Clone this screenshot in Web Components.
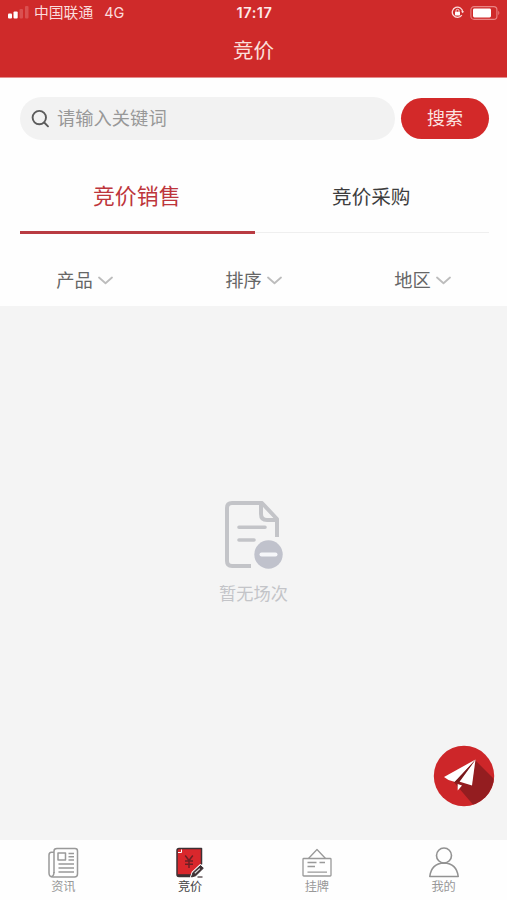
<!DOCTYPE html>
<html lang="zh-CN">
<head>
<meta charset="utf-8">
<title>竞价</title>
<style>
    body {
        margin: 0;
        font-family: "Liberation Sans", "Noto Sans CJK SC", sans-serif;
    }
</style>
</head>
<body>
<auction-page></auction-page>

<template id="status-bar">
<style>
    :host {
        display: grid;
        grid-template-columns: 1fr auto 1fr;
        align-items: center;
        height: 24px;
        padding: 0 6px 0 8px;
        color: #fbdcdc;
        font-size: 14.8px;
        line-height: 24px;
        font-family: Inter, "Noto Sans CJK SC", sans-serif;
    }

    .left, .right {
        display: flex;
        align-items: center;
    }

    .left svg {
        margin-right: 5px;
    }

    .carrier {
        padding-top: 1px;
    }

    .network {
        margin-left: 11px;
        padding-top: 1px;
        font-size: 14.5px;
    }

    .time {
        font-size: 14.5px;
        font-weight: 600;
        letter-spacing: 0.6px;
        color: #fdeaea;
    }

    .right {
        justify-content: flex-end;
        gap: 6px;
    }
</style>
<div class="left">
    <svg width="21" height="13" viewBox="0 0 21 13">
        <rect x="0" y="7.500" width="4" height="5" rx="1" fill="#fff"/>
        <rect x="5.500" y="5.500" width="4.200" height="7" rx="1" fill="#fff"/>
        <rect x="11.500" y="3" width="3.500" height="9.500" rx="1" fill="#da5050"/>
        <rect x="17" y="0" width="3.500" height="12.500" rx="1" fill="#da5050"/>
    </svg>
    <span class="carrier">中国联通</span>
    <span class="network">4G</span>
</div>
<div class="time">17:17</div>
<div class="right">
    <svg width="13" height="13" viewBox="0 0 13 13" fill="none" stroke="#fbdcdc">
        <path d="M10.8 9.2A5.2 5.2 0 1 1 11.7 6" stroke-width="1.3"/>
        <path d="M10 5.5l1.8 1.8L13 5.2z" fill="#fbdcdc" stroke="none"/>
        <rect x="4" y="5.7" width="5" height="3.7" rx=".6" fill="#fff" stroke="none"/>
        <path d="M5 6V4.8a1.5 1.5 0 0 1 3 0V6"/>
    </svg>
    <svg width="31" height="14" viewBox="0 0 31 14">
        <rect x=".9" y=".6" width="26" height="12.8" rx="3.2" fill="none" stroke="#ea8585" stroke-width="1.1"/>
        <rect x="3" y="2.6" width="18" height="8.8" rx="1.4" fill="#fff"/>
        <path d="M28.3 4.8q2 2.2 0 4.4z" fill="#ea8585"/>
    </svg>
</div>
</template>

<template id="page-header">
<style>
    :host {
        display: block;
        height: 78px;
        background-color: #cf2a2a;
        border-bottom: 1px solid #e58d8d;
        box-sizing: border-box;
    }

    h1 {
        margin: 0;
        padding-top: 2px;
        text-align: center;
        font-size: 20.5px;
        line-height: 50px;
        font-weight: 400;
        color: #fbe0dc;
    }
</style>
<status-bar></status-bar>
<h1><slot></slot></h1>
</template>

<template id="search-box">
<style>
    :host {
        display: flex;
        align-items: center;
        gap: 6px;
        padding: 19px 18px 0 20px;
    }

    .field {
        flex: 1;
        display: flex;
        align-items: center;
        height: 43px;
        padding-left: 11px;
        border-radius: 22px;
        background-color: #f2f2f2;
        box-sizing: border-box;
        color: #989898;
        font-size: 18.3px;
        line-height: 42px;
    }

    .field svg {
        margin-right: 7px;
    }

    button {
        width: 88px;
        height: 41px;
        margin-bottom: 1px;
        padding: 0 0 2px;
        border: none;
        border-radius: 21px;
        background-color: #d32929;
        color: #fbe4e2;
        font: inherit;
        font-size: 18px;
    }
</style>
<div class="field">
    <svg width="19" height="19" viewBox="0 0 19 19" fill="none" stroke="#5c5c5c" stroke-width="1.9" stroke-linecap="round">
        <circle cx="8.3" cy="8.6" r="6.7"/>
        <path d="M13.2 13.5l3.8 3.8"/>
    </svg>
    <slot></slot>
</div>
<button type="button">搜索</button>
</template>

<template id="tab-item">
<style>
    :host {
        flex: 1;
        display: flex;
        justify-content: center;
        align-items: center;
        height: 75px;
        padding: 0 1px 3px 0;
        box-sizing: border-box;
        font-size: 19.6px;
        color: #3d3d3d;
        background: linear-gradient(#efefef, #efefef) 0 73px / 100% 1px no-repeat;
    }

    :host([active]) {
        padding-bottom: 4px;
        font-size: 21.9px;
        color: #bd353b;
        background: linear-gradient(#b93b42, #b93b42) 0 100% / 100% 3px no-repeat;
    }
</style>
<slot></slot>
</template>

<template id="filter-item">
<style>
    :host {
        flex: 1;
        display: flex;
        justify-content: center;
        align-items: center;
        gap: 5px;
        font-size: 18.3px;
        color: #666;
    }

    svg {
        margin-top: 3px;
    }
</style>
<slot></slot>
<svg width="15" height="9" viewBox="0 0 15 9" fill="none" stroke="#bcbcbc" stroke-width="1.8" stroke-linecap="round" stroke-linejoin="round">
    <path d="M1 1.5l6.5 5.7L14 1.5"/>
</svg>
</template>

<template id="empty-state">
<style>
    :host {
        display: flex;
        flex-direction: column;
        align-items: center;
        color: #c3c4c8;
        font-size: 17.2px;
        line-height: 26px;
    }

    svg {
        margin-bottom: 11px;
    }
</style>
<svg width="60" height="70" viewBox="0 0 60 70" fill="none" stroke="#c3c4c8" stroke-width="4" stroke-linecap="round" stroke-linejoin="round">
    <path d="M27 66H8q-5 0-5-5V8q0-5 5-5h30l15 16v18" stroke-linecap="butt"/>
    <path d="M37 3v11q0 6 6 6h10"/>
    <path d="M15 27.3h26M15 40h15" stroke-width="3.6"/>
    <circle cx="44.5" cy="54.5" r="14.2" fill="#c0c2cc" stroke="none"/>
    <path d="M37.5 54.5h14" stroke="#f6f7fa"/>
</svg>
<slot></slot>
</template>

<template id="send-button">
<style>
    :host {
        display: block;
        position: absolute;
        right: 12px;
        bottom: 33px;
        width: 62px;
        height: 62px;
    }
</style>
<svg width="62" height="62" viewBox="0 0 62 62">
    <defs>
        <clipPath id="disc"><circle cx="31" cy="31" r="30"/></clipPath>
    </defs>
    <circle cx="31" cy="31" r="30.2" fill="#cd2629"/>
    <path d="M42 15L76 49 60 76H54L19 35z" fill="#941d20" clip-path="url(#disc)"/>
    <path d="M42.5 14.500L11 32l4.500 3 6.500 2z" fill="#fff"/>
    <path d="M42.5 14.500L26 36.500l13 4z" fill="#fff"/>
    <path d="M42 15.500L21.500 37l4.500.500z" fill="#79191b"/>
    <path d="M24.700 39l4.300 1.500-4.300 5z" fill="#fff"/>
</svg>
</template>

<template id="nav-item">
<style>
    :host {
        flex: 1;
        display: flex;
        flex-direction: column;
        align-items: center;
        padding-top: 6px;
        font-size: 12.2px;
        line-height: 16px;
        color: #989898;
    }

    :host([active]) {
        color: #444;
    }

    .icon {
        height: 33px;
    }
</style>
<div class="icon"><slot name="icon"></slot></div>
<slot></slot>
</template>

<template id="auction-page">
<style>
    :host {
        display: flex;
        flex-direction: column;
        height: 900px;
        background-color: #fefefe;
    }

    svg {
        display: block;
    }

    .tabs {
        display: flex;
        padding: 19px 18px 0 20px;
    }

    .filters {
        display: flex;
        height: 72px;
        padding-top: 18px;
        box-sizing: border-box;
    }

    main {
        flex: 1;
        position: relative;
        background-color: #f4f4f4;
        padding-top: 194px;
    }

    nav {
        display: flex;
        height: 60px;
        background-color: #fefefe;
    }
</style>
<page-header>竞价</page-header>
<search-box>请输入关键词</search-box>
<div class="tabs">
    <tab-item active>竞价销售</tab-item>
    <tab-item>竞价采购</tab-item>
</div>
<div class="filters">
    <filter-item>产品</filter-item>
    <filter-item>排序</filter-item>
    <filter-item>地区</filter-item>
</div>
<main>
    <empty-state>暂无场次</empty-state>
    <send-button></send-button>
</main>
<nav>
    <nav-item>
        <svg slot="icon" width="32" height="34" viewBox="0 0 32 34" fill="none" stroke="#999" stroke-width="1.5" stroke-linejoin="round">
            <path d="M7 6.200H4.500Q2 6.200 2 9v18q0 4 4 4h21.500q3 0 3-3V5q0-2.500-2.500-2.500H10Q7 2.500 7 5v22"/>
            <path d="M7 26q0 4-2.500 4.500"/>
            <rect x="11" y="7" width="7.500" height="7"/>
            <path d="M21.500 7.500H27M21.500 10.700H27M21.500 14H27M11.500 18H27M11.500 22H27M11.500 26H27"/>
        </svg>
        资讯
    </nav-item>
    <nav-item active>
        <svg slot="icon" width="32" height="34" viewBox="0 0 32 34" fill="none" stroke="#3d3033" stroke-width="1.500" stroke-linejoin="round">
            <path d="M5 2.500h22.500V18l-9 12.500H5q-2 0-2-2V4.500q0-2 2-2z" fill="#d9272c"/>
            <path d="M4 6.500h3.500v-3" stroke="#fff" stroke-width="1"/>
            <path d="M3.500 29.500H17" stroke-width="2.600"/>
            <path d="M11.200 9.500l3.800 5 3.800-5M15 14.500V22M11 15h8M11 18.300h8" stroke="#6d2025" stroke-width="1.500"/>
            <path d="M17.500 31l1.500-4.500 7.500-7 2.800 2.700-7.600 7.500z" fill="#3d3033" stroke="#fff" stroke-width="2.800"/>
            <path d="M17.500 31l1.500-4.500 7.500-7 2.800 2.700-7.600 7.500z" fill="#3d3033" stroke-width="1"/>
            <path d="M20.800 27.300l5-4.700" stroke="#ddd" stroke-width="1.200"/>
            <path d="M23.500 31h5" stroke-width="1.200"/>
        </svg>
        竞价
    </nav-item>
    <nav-item>
        <svg slot="icon" width="32" height="34" viewBox="0 0 32 34" fill="none" stroke="#999" stroke-width="1.300" stroke-linejoin="round">
            <rect x="2" y="12.500" width="28" height="17.500" rx=".8"/>
            <path d="M7.500 12.500L16 3.500l8.500 9M6.500 16.500h9M18.500 16.500H24M6.500 20.500H14M6.500 26.200h19.500"/>
        </svg>
        挂牌
    </nav-item>
    <nav-item>
        <svg slot="icon" width="32" height="34" viewBox="0 0 32 34" fill="none" stroke="#929292" stroke-width="1.600" stroke-linejoin="round">
            <circle cx="16" cy="9.500" r="7.500"/>
            <path d="M1.800 30.500q1.500-13 14.200-13.500 12.700.5 14.200 13.500z"/>
        </svg>
        我的
    </nav-item>
</nav>
</template>

<script>
// clones the template with the same id as the tag
class TemplateElement extends HTMLElement {
    constructor() {
        super();
        this.shadow = this.attachShadow({mode: 'open'});
        let template = document.getElementById(this.localName);
        this.shadow.append(template.content.cloneNode(true));
    }
}

class StatusBar extends TemplateElement {}
class PageHeader extends TemplateElement {}
class SearchBox extends TemplateElement {}
class TabItem extends TemplateElement {}
class FilterItem extends TemplateElement {}
class EmptyState extends TemplateElement {}
class SendButton extends TemplateElement {}
class NavItem extends TemplateElement {}

class AuctionPage extends TemplateElement {
    connectedCallback() {
        let tabs = this.shadow.querySelectorAll('tab-item');
        tabs.forEach((tab) => {
            tab.addEventListener('click', () => {
                tabs.forEach((other) => other.toggleAttribute('active', other === tab));
            });
        });
    }
}

window.customElements.define('status-bar', StatusBar);
window.customElements.define('page-header', PageHeader);
window.customElements.define('search-box', SearchBox);
window.customElements.define('tab-item', TabItem);
window.customElements.define('filter-item', FilterItem);
window.customElements.define('empty-state', EmptyState);
window.customElements.define('send-button', SendButton);
window.customElements.define('nav-item', NavItem);
window.customElements.define('auction-page', AuctionPage);
</script>
</body>
</html>
